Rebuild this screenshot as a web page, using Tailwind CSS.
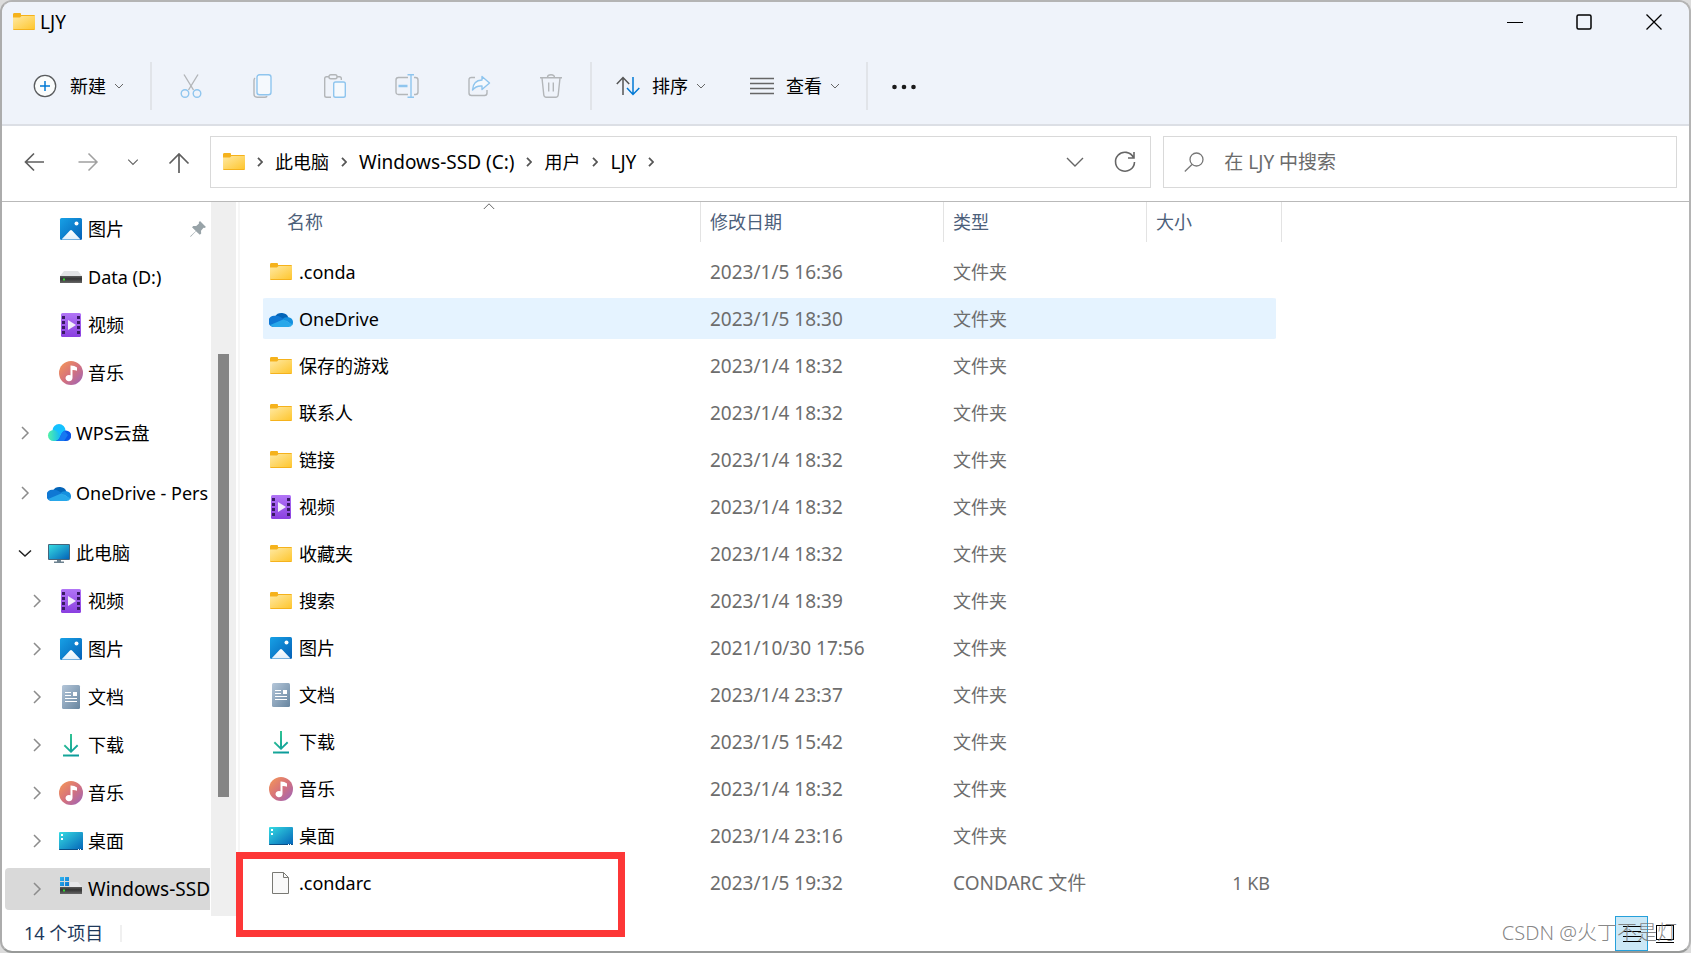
<!DOCTYPE html>
<html lang="zh-CN">
<head>
<meta charset="utf-8">
<title>LJY</title>
<script src="https://cdn.jsdelivr.net/npm/@tailwindcss/browser@4"></script>
</head>
<body class="bg-[#dcdcdc] font-['Noto_Sans','Noto_Sans_CJK_SC',sans-serif] text-[18px] leading-6 text-black">

<svg class="absolute size-0" aria-hidden="true">
  <defs>
    <linearGradient id="gFolder" x1="0" y1="0" x2="1" y2="1"><stop offset="0" stop-color="#ffe9a2"/><stop offset="1" stop-color="#fec62f"/></linearGradient>
    <linearGradient id="gPic" x1="0" y1="0" x2="1" y2="1"><stop offset="0" stop-color="#17a1e6"/><stop offset="1" stop-color="#0560b6"/></linearGradient>
    <linearGradient id="gHill" x1="0" y1="0" x2="0" y2="1"><stop offset="0" stop-color="#fff"/><stop offset="1" stop-color="#e2effa"/></linearGradient>
    <linearGradient id="gVideo" x1="0" y1="0" x2="0" y2="1"><stop offset="0" stop-color="#b175f6"/><stop offset="1" stop-color="#8a3fe0"/></linearGradient>
    <linearGradient id="gMusic" x1="0" y1="0" x2="1" y2="1"><stop offset="0.1" stop-color="#f0915c"/><stop offset="0.5" stop-color="#d6727b"/><stop offset="1" stop-color="#9a63bd"/></linearGradient>
    <linearGradient id="gDoc" x1="0" y1="0" x2="1" y2="1"><stop offset="0" stop-color="#b4c6d9"/><stop offset="1" stop-color="#67859f"/></linearGradient>
    <linearGradient id="gDown" x1="0" y1="0" x2="0.6" y2="1"><stop offset="0" stop-color="#3ccf91"/><stop offset="1" stop-color="#0b9b9b"/></linearGradient>
    <linearGradient id="gDesk" x1="0" y1="0" x2="1" y2="1"><stop offset="0" stop-color="#35dbe2"/><stop offset="1" stop-color="#0463b8"/></linearGradient>
    <linearGradient id="gWps" x1="0" y1="0" x2="1" y2="0"><stop offset="0" stop-color="#52f2a8"/><stop offset="1" stop-color="#0bb3ff"/></linearGradient>
    <linearGradient id="gDrive" x1="0" y1="0" x2="0" y2="1"><stop offset="0" stop-color="#5a5a5a"/><stop offset="0.4" stop-color="#343434"/><stop offset="1" stop-color="#666"/></linearGradient>
    <linearGradient id="gFlag" x1="0" y1="0" x2="1" y2="1"><stop offset="0" stop-color="#2fb6f2"/><stop offset="1" stop-color="#0a74cf"/></linearGradient>
  </defs>
  <symbol id="folder" viewBox="0 0 24 24"><path d="M1 4.500Q1 3 2 3h6q1 0 1 1v1H22q1 0 1 1V19q0 1-1 1H2q-1 0-1-1z" fill="#f5b21c"/><path d="M1 7.500h7L9.500 6H23v13H1z" fill="url(#gFolder)"/></symbol>
  <symbol id="pic" viewBox="0 0 24 24"><rect x="1" y="1" width="22" height="22" rx="1.500" fill="url(#gPic)"/><path d="M2.500 22.500 11 13.600q1-1.200 2 0l8.500 8.900z" fill="url(#gHill)"/><circle cx="17.500" cy="6.500" r="2" fill="#fff"/></symbol>
  <symbol id="video" viewBox="0 0 24 24"><rect x="2" width="20" height="24" rx="1.500" fill="url(#gVideo)"/><g fill="#3a1a66"><rect x="3" y="3" width="3" height="3"/><rect x="3" y="8" width="3" height="3"/><rect x="3" y="13" width="3" height="3"/><rect x="3" y="18" width="3" height="3"/><rect x="18" y="3" width="3" height="3"/><rect x="18" y="8" width="3" height="3"/><rect x="18" y="13" width="3" height="3"/><rect x="18" y="18" width="3" height="3"/></g><path d="M9 7v10l8-5z" fill="#f2eefa"/></symbol>
  <symbol id="music" viewBox="0 0 24 24"><circle cx="12" cy="12" r="12" fill="url(#gMusic)"/><path d="M12 4.500q3.500 0 6 2v3.300q-2-1-4.500-.9V17a3.500 3.200 0 1 1-2-2.800V4.500z" fill="#fff"/></symbol>
  <symbol id="doc" viewBox="0 0 24 24"><rect x="3" width="18" height="24" rx="1.500" fill="url(#gDoc)"/><path d="M6 7.500h6M6 10.500h6M6 13.500h12M6 16.500h12" stroke="#fff" fill="none"/><rect x="14" y="7" width="4" height="4" fill="#fff"/></symbol>
  <symbol id="down" viewBox="0 0 24 24"><path d="M11 1h2v15.500l5-5 1.300 1.400L12 20l-7.300-7.100L6 11.500l5 5zM4 21.500h16v2H4z" fill="url(#gDown)"/></symbol>
  <symbol id="desk" viewBox="0 0 24 24"><rect y="3" width="24" height="18" rx="1" fill="url(#gDesk)"/><path d="M0 20h24v0q0 1-1 1H1q-1 0-1-1z" fill="#0b4f86"/><path d="M2 5h2v2H2zM2 9h2v2H2zM19 20h1v1h-1zM21 20h1v1h-1z" fill="#fff"/></symbol>
  <symbol id="pc" viewBox="0 0 24 24"><rect x="1" y="3" width="22" height="16" rx="1" fill="#45657c"/><rect x="2" y="4" width="20" height="14" fill="url(#gDesk)"/><path d="M10 19h4v1.500h3V22H7v-1.500h3z" fill="#6d8290"/></symbol>
  <symbol id="cloud" viewBox="0 0 24 24"><path d="M6 9.500a7.500 7 0 0 1 13.500 1.200L14 15 5 12z" fill="#0364b8"/><path d="M6 8.800q2.500-.6 5 .9l6.500 4L4 20a5.600 5.600 0 0 1 2-11.200z" fill="#0f78d4"/><path d="M14 11.500q2-1.600 5.200-1.300A5 5 0 0 1 24 15.500q0 1.500-.8 2.800z" fill="#1490df"/><path d="m14.700 12.300 8.800 5.200Q22.300 20 19.500 20H5.500q-2.600 0-4.300-2z" fill="#28a8ea"/></symbol>
  <symbol id="wps" viewBox="0 0 24 24"><path d="M5.500 9.500a6.500 6.500 0 0 1 13 0L12 17z" fill="#15c1ff"/><path d="M6.500 9q2.800 0 4.800 2.800L15 17l-3 3H6.500A5.500 5.500 0 0 1 6.500 9z" fill="url(#gWps)"/><path d="M9 20q3-1 4.500-5 2-5.500 5.500-5.500a5.200 5.200 0 0 1 0 10.500z" fill="#0a57e6"/><path d="M9 20q3-1 4.500-5 1.500-4.500 4-5.300L21 14l-4 6z" fill="#1678f2"/></symbol>
  <symbol id="drive" viewBox="0 0 24 24"><path d="M5 6h14l4 5H1z" fill="#e2e3e5"/><rect x="1" y="11" width="22" height="7" fill="url(#gDrive)"/><rect x="4" y="13.500" width="2" height="2" fill="#33d631"/></symbol>
  <symbol id="ssd" viewBox="0 0 24 24"><path d="M10 5h9l4 5H10z" fill="#e6e7e9"/><rect x="1" y="10" width="22" height="7" fill="url(#gDrive)"/><rect x="4" y="12.500" width="2" height="2" fill="#33d631"/><path d="M0 0h11v10H0z" fill="#d9d9d9"/><path d="M1 0h4v4H1zM6 0h4v4H6zM1 5h4v4H1zM6 5h4v4H6z" fill="url(#gFlag)"/></symbol>
  <symbol id="file" viewBox="0 0 24 24"><path d="M3.500 1.500h11l5 5v16h-16z" fill="#f9f9f9" stroke="#797974"/><path d="M14.500 1.500v5h5" fill="none" stroke="#797974"/></symbol>
  <symbol id="chevDown" viewBox="0 0 10 10"><path d="m1 3 4 4 4-4" fill="none" stroke="currentColor"/></symbol>
  <symbol id="chevRight" viewBox="0 0 14 14"><path d="m4 1 6 6-6 6" fill="none" stroke="currentColor" stroke-width="1.500"/></symbol>
  <symbol id="crumb" viewBox="0 0 10 10"><path d="M3 .8 7 5 3 9.200" fill="none" stroke="currentColor" stroke-width="1.800"/></symbol>
</svg>

<div class="flex h-screen flex-col overflow-hidden rounded-xl border-2 border-t-[#b4b4b4] border-r-[#b4b4b4] border-b-[#989a99] border-l-[#acacac] bg-white">

  <header class="border-b-2 border-[#dcdfe5] bg-[#eff3fa]">
    <div class="flex h-10 items-center pl-[10px]">
      <svg class="size-6"><use href="#folder"/></svg>
      <h1 class="ml-1 flex-1 text-[19px]">LJY</h1>
      <div class="flex h-full">
        <button aria-label="最小化" class="flex w-[69px] items-center justify-center"><svg class="size-4" viewBox="0 0 16 16"><path d="M0 8.500h16" stroke="#000"/></svg></button>
        <button aria-label="最大化" class="flex w-[69px] items-center justify-center"><svg class="size-4" viewBox="0 0 16 16"><rect x="1" y="1" width="14" height="14" rx="1.500" fill="none" stroke="#000" stroke-width="1.500"/></svg></button>
        <button aria-label="关闭" class="flex w-[71px] items-center justify-center"><svg class="size-4" viewBox="0 0 16 16"><path d="m.5.5 15 15m0-15-15 15" stroke="#000" stroke-width="1.300"/></svg></button>
      </div>
    </div>

    <div class="flex h-[82px] items-center pt-[6px]" role="toolbar" aria-label="命令栏">
      <button class="flex items-center pl-[31px] pr-[26px]">
        <svg class="size-6" viewBox="0 0 24 24"><circle cx="12" cy="12" r="10.700" fill="#fafcfc" stroke="#5a5c5e" stroke-width="1.300"/><path d="M12 7v10M7 12h10" stroke="#0078d4" stroke-width="1.500"/></svg>
        <span class="ml-[13px]">新建</span>
        <svg class="ml-2 size-[10px] text-[#666]"><use href="#chevDown"/></svg>
      </button>
      <span class="h-12 w-[2px] bg-[#e1e4e9]"></span>
      <div class="flex px-[3px]">
        <button aria-label="剪切" disabled class="flex w-[72px] justify-center"><svg class="size-6" viewBox="0 0 24 24" fill="none" stroke-width="1.400"><path d="M5 .5 14.500 16M19 .5 9.500 16" stroke="#b3b6b9"/><circle cx="6" cy="19.500" r="3.800" stroke="#8fc5ee"/><circle cx="18" cy="19.500" r="3.800" stroke="#8fc5ee"/></svg></button>
        <button aria-label="复制" disabled class="flex w-[72px] justify-center"><svg class="size-6" viewBox="0 0 24 24" fill="none" stroke-width="1.400"><path d="M4 4q-1 .8-1 2.200V20q0 3.200 3.200 3.200h7.600q1.500 0 2.400-1" stroke="#b3b6b9"/><rect x="6" y=".7" width="14" height="20" rx="2.500" stroke="#8fc5ee" fill="#f5f9fd"/></svg></button>
        <button aria-label="粘贴" disabled class="flex w-[72px] justify-center"><svg class="size-6" viewBox="0 0 24 24" fill="none" stroke-width="1.400"><path d="M8 23.300H3.500q-1.800 0-1.800-1.800v-17q0-1.800 1.800-1.800H6m8 0h2.500q1.800 0 1.800 1.800V6" stroke="#b3b6b9"/><rect x="6" y=".7" width="8" height="4" rx="1.800" stroke="#b3b6b9"/><rect x="10.700" y="8" width="11.600" height="15.300" rx="1.800" stroke="#8fc5ee" fill="#f5f9fd"/></svg></button>
        <button aria-label="重命名" disabled class="flex w-[72px] justify-center"><svg class="size-6" viewBox="0 0 24 24" fill="none" stroke-width="1.400"><path d="M13 20.500H3.500q-2.500 0-2.500-2.500V6q0-2.500 2.500-2.500H13m6 0h1.500Q23 3.500 23 6v12q0 2.500-2.500 2.500H19" stroke="#b3b6b9"/><path d="M3.500 12h9" stroke="#8fc5ee" stroke-width="2.500"/><path d="M12.500.8H19M12.500 23.200H19M16 .8v22.400" stroke="#8fc5ee"/></svg></button>
        <button aria-label="共享" disabled class="flex w-[72px] justify-center"><svg class="size-6" viewBox="0 0 24 24" fill="none" stroke-width="1.400" stroke-linejoin="round"><path d="M8 3.500H4.500Q2 3.500 2 6v13q0 2.500 2.500 2.500h13q2.500 0 2.500-2.500v-3" stroke="#b3b6b9"/><path d="M15 2.500 22.500 9 15 15.500V12q-6-.5-9.500 4Q6 6.500 15 6z" stroke="#8fc5ee" fill="#f5f9fd"/></svg></button>
        <button aria-label="删除" disabled class="flex w-[72px] justify-center"><svg class="size-6" viewBox="0 0 24 24" fill="none" stroke="#b3b6b9" stroke-width="1.400"><path d="M1 3.700h22M8.500 3.500q0-2.800 3.500-2.800t3.500 2.800M3 4l1.800 17q.3 2.200 2.400 2.200h9.600q2.100 0 2.400-2.200L21 4M9.700 8.500v9M14.300 8.500v9"/></svg></button>
      </div>
      <span class="h-12 w-[2px] bg-[#e1e4e9]"></span>
      <button class="flex items-center pl-6">
        <svg class="size-6" viewBox="0 0 24 24" fill="none" stroke-width="1.500"><path d="M7 21V3.500M.8 10 7 3.500l6.200 6.500" stroke="#555"/><path d="M17 3v17.500M11 14l6 6.500 6.300-6.500" stroke="#0078d4"/></svg>
        <span class="ml-3">排序</span>
        <svg class="ml-2 size-[10px] text-[#666]"><use href="#chevDown"/></svg>
      </button>
      <button class="flex items-center pl-11 pr-[26px]">
        <svg class="size-6" viewBox="0 0 24 24"><path d="M0 4.500h24M0 9.500h24M0 14.500h24M0 19.500h24" stroke="#666" stroke-width="1.500"/></svg>
        <span class="ml-3">查看</span>
        <svg class="ml-2 size-[10px] text-[#666]"><use href="#chevDown"/></svg>
      </button>
      <span class="h-12 w-[2px] bg-[#e1e4e9]"></span>
      <button aria-label="更多" class="px-6"><svg class="size-6" viewBox="0 0 24 24" fill="#1a1a1a"><circle cx="2.500" cy="13" r="2.300"/><circle cx="12" cy="13" r="2.300"/><circle cx="21.500" cy="13" r="2.300"/></svg></button>
    </div>
  </header>

  <nav class="flex h-[76px] items-center gap-3 border-b border-[#b9b9b9] pb-[3px] pr-3" aria-label="导航">
    <div class="flex w-[196px] shrink-0 items-center pl-[21px]">
      <button aria-label="后退"><svg class="size-6" viewBox="0 0 24 24" fill="none" stroke="#5f5f5f" stroke-width="1.700"><path d="M21 12H2.500m8.500-8.500L2.500 12l8.500 8.500"/></svg></button>
      <button aria-label="前进" class="ml-[29px]"><svg class="size-6" viewBox="0 0 24 24" fill="none" stroke="#a0a0a0" stroke-width="1.500"><path d="M2.500 12H21m-8.500-8.500L21 12l-8.500 8.500"/></svg></button>
      <button aria-label="最近的位置" class="ml-[27px]"><svg class="size-3 text-[#666]"><use href="#chevDown"/></svg></button>
      <button aria-label="上移" class="ml-[28px]"><svg class="size-6" viewBox="0 0 24 24" fill="none" stroke="#5f5f5f" stroke-width="1.700"><path d="M12 23V3.500M2.500 13.500 12 4l9.500 9.500"/></svg></button>
    </div>
    <div class="flex h-[52px] min-w-0 flex-[942_1_942px] items-center border border-[#d9d9d9] pl-[11px]">
      <svg class="size-6 shrink-0"><use href="#folder"/></svg>
      <svg class="ml-[9px] size-[10px] shrink-0 text-[#555]"><use href="#crumb"/></svg>
      <a href="#" class="ml-[10px] whitespace-nowrap">此电脑</a>
      <svg class="ml-[10px] size-[10px] shrink-0 text-[#555]"><use href="#crumb"/></svg>
      <a href="#" class="ml-[10px] whitespace-nowrap text-[19px]">Windows-SSD (C:)</a>
      <svg class="ml-[10px] size-[10px] shrink-0 text-[#555]"><use href="#crumb"/></svg>
      <a href="#" class="ml-[10px] whitespace-nowrap">用户</a>
      <svg class="ml-[10px] size-[10px] shrink-0 text-[#555]"><use href="#crumb"/></svg>
      <a href="#" class="ml-[10px] whitespace-nowrap text-[19px]">LJY</a>
      <svg class="ml-[10px] size-[10px] shrink-0 text-[#555]"><use href="#crumb"/></svg>
      <button aria-label="以前的位置" class="ml-auto"><svg class="size-5" viewBox="0 0 20 20" fill="none" stroke="#666" stroke-width="1.400"><path d="m2 6 8 8 8-8"/></svg></button>
      <button aria-label="刷新" class="ml-7 mr-[13px]"><svg class="size-6" viewBox="0 0 24 24" fill="none" stroke="#666" stroke-width="1.600"><path d="M20.500 7.500A9.500 9.500 0 1 0 21.500 12M21 2v6h-6"/></svg></button>
    </div>
    <label class="flex h-[52px] min-w-0 flex-[514_1_514px] items-center border border-[#d9d9d9] pl-5">
      <svg class="size-5" viewBox="0 0 20 20" fill="none" stroke="#777" stroke-width="1.300"><circle cx="12.500" cy="7.500" r="6.500"/><path d="M8 12.500.8 19.500"/></svg>
      <input type="search" aria-label="搜索" placeholder="在 LJY 中搜索" class="ml-5 min-w-0 flex-1 text-[19px] outline-none placeholder:text-[#6b6b6b]">
    </label>
  </nav>

  <div class="relative flex min-h-0 flex-1">
    <aside class="flex w-[209px] shrink-0 flex-col overflow-hidden pl-[3px] pt-[3px]" aria-label="文件夹树">
      <ul id="tree"></ul>
    </aside>
    <div class="mb-[35px] flex w-[25px] shrink-0 flex-col items-center bg-[#efefef] pt-[152px]"><div class="h-[443px] w-[11px] bg-[#858585]"></div></div>
    <div class="mb-[35px] ml-[2px] w-[2px] shrink-0 bg-[#f6f6f6]"></div>

    <main class="min-w-0 flex-1 pl-[23px]">
      <table class="w-[1019px] table-fixed border-separate border-spacing-0 text-left">
        <colgroup><col class="w-[438px]"><col class="w-[243px]"><col class="w-[203px]"><col class="w-[129px]"><col class="w-[6px]"></colgroup>
        <thead>
          <tr class="h-10 text-[#4c607a]">
            <th class="relative border-r border-[#e3e3e3] pl-6 font-normal">名称<svg class="absolute left-[220px] top-0 h-2 w-3" viewBox="0 0 12 8" fill="none" stroke="#666"><path d="m.8 7 5.200-5.200L11.200 7"/></svg></th>
            <th class="border-r border-[#e3e3e3] pl-[9px] font-normal">修改日期</th>
            <th class="border-r border-[#e3e3e3] pl-[9px] font-normal">类型</th>
            <th colspan="2" class="border-r border-[#e3e3e3] pl-[9px] font-normal">大小</th>
          </tr>
        </thead>
        <tbody id="files" class="before:block before:h-[6px]"></tbody>
      </table>
    </main>

    <footer class="absolute inset-x-0 bottom-0 flex h-[35px] items-center pl-[22px] text-[#1e395b]">
      <span class="pb-[2px]">14 个项目</span>
      <span class="ml-[17px] h-[17px] w-[2px] bg-[#f0f0f0]"></span>
      <div class="ml-auto flex h-full items-center pr-2">
        <button aria-label="详细信息" class="flex h-[35px] w-[33px] items-center justify-center border border-[#26a0da] bg-[#cce8f6]"><svg class="size-5" viewBox="0 0 20 20"><path d="M1 2.500h18M1 7.500h18M1 12.500h18M1 17.500h18" stroke="#000"/></svg></button>
        <button aria-label="大图标" class="flex w-[33px] items-center justify-center"><svg class="size-5" viewBox="0 0 20 20"><rect x="1.500" y="1.500" width="17" height="14" fill="none" stroke="#000"/><path d="M1 18.500h18" stroke="#000"/></svg></button>
      </div>
      <span class="absolute bottom-[6px] right-[12px] whitespace-nowrap text-[20px] font-light text-[#777]/90">CSDN @火丁不是灯</span>
    </footer>
    <div class="pointer-events-none absolute bottom-[14px] left-[234px] h-[85px] w-[389px] border-7 border-[#fd3737]"></div>
  </div>
</div>

<script>
  const tree = [
    { icon: 'pic', name: '图片', pin: true }, { icon: 'drive', name: 'Data (D:)' },
    { icon: 'video', name: '视频' }, { icon: 'music', name: '音乐' },
    { icon: 'wps', name: 'WPS云盘', root: true, arrow: true }, { icon: 'cloud', name: 'OneDrive - Pers', root: true, arrow: true },
    { icon: 'pc', name: '此电脑', root: true, open: true },
    { icon: 'video', name: '视频', arrow: true }, { icon: 'pic', name: '图片', arrow: true }, { icon: 'doc', name: '文档', arrow: true },
    { icon: 'down', name: '下载', arrow: true }, { icon: 'music', name: '音乐', arrow: true }, { icon: 'desk', name: '桌面', arrow: true },
    { icon: 'ssd', name: 'Windows-SSD', arrow: true, selected: true },
  ];
  document.getElementById('tree').innerHTML = tree.map(n => `
    <li class="flex h-12 items-center ${n.root ? 'mt-3' : ''}">
      <a href="#" class="flex h-[42px] w-full items-center overflow-hidden rounded-l-sm ${n.root ? 'pl-[13px]' : 'pl-[25px]'} ${n.selected ? 'mr-px bg-[#d9d9d9] text-[19px]' : ''}">
        <span class="flex w-[14px] shrink-0">${n.open
          ? '<svg class="size-[14px] text-[#222]" viewBox="0 0 14 14"><path d="m1 4.500 6 5.500 6-5.500" fill="none" stroke="currentColor" stroke-width="1.500"/></svg>'
          : n.arrow ? '<svg class="size-[14px] text-[#8c8c8c]"><use href="#chevRight"/></svg>' : ''}</span>
        <svg class="ml-[15px] size-6 shrink-0"><use href="#${n.icon}"/></svg>
        <span class="ml-[5px] whitespace-nowrap">${n.name}</span>
        ${n.pin ? '<svg class="ml-auto mr-[5px] size-4 shrink-0" viewBox="0 0 16 16"><path d="M10 0 16 6l-1.500 1-1-.2-2.500 3 .2 2.700-1.400 1.300L6 10.200 1 15.500 0 16l.5-1 5.300-5L2 6.200l1.300-1.300 2.900.2L9 2.500 8.800 1.200z" fill="#98a3a8"/></svg>' : ''}
      </a>
    </li>`).join('');

  const files = [
    ['folder', '.conda', '2023/1/5 16:36'], ['cloud', 'OneDrive', '2023/1/5 18:30'], ['folder', '保存的游戏', '2023/1/4 18:32'],
    ['folder', '联系人', '2023/1/4 18:32'], ['folder', '链接', '2023/1/4 18:32'], ['video', '视频', '2023/1/4 18:32'],
    ['folder', '收藏夹', '2023/1/4 18:32'], ['folder', '搜索', '2023/1/4 18:39'], ['pic', '图片', '2021/10/30 17:56'],
    ['doc', '文档', '2023/1/4 23:37'], ['down', '下载', '2023/1/5 15:42'], ['music', '音乐', '2023/1/4 18:32'],
    ['desk', '桌面', '2023/1/4 23:16'], ['file', '.condarc', '2023/1/5 19:32', 'CONDARC 文件', '1 KB'],
  ];
  document.getElementById('files').innerHTML = files.map(([icon, name, date, type = '文件夹', size = '']) => `
    <tr class="h-[47px] text-[#6d6d6d] ${name === 'OneDrive' ? '*:not-last:bg-[#e5f3ff]' : ''} *:border-y-3 *:border-transparent *:bg-clip-padding">
      <td class="rounded-l-sm pl-[6px] text-black"><span class="flex items-center"><svg class="mr-[6px] size-6"><use href="#${icon}"/></svg>${name}</span></td>
      <td class="pl-[9px] text-[19px]">${date}</td>
      <td class="pl-[9px] ${icon === 'file' ? 'text-[19px]' : ''}">${type}</td>
      <td class="rounded-r-sm pr-[6px] text-right">${size}</td>
      <td></td>
    </tr>`).join('');
</script>
</body>
</html>
